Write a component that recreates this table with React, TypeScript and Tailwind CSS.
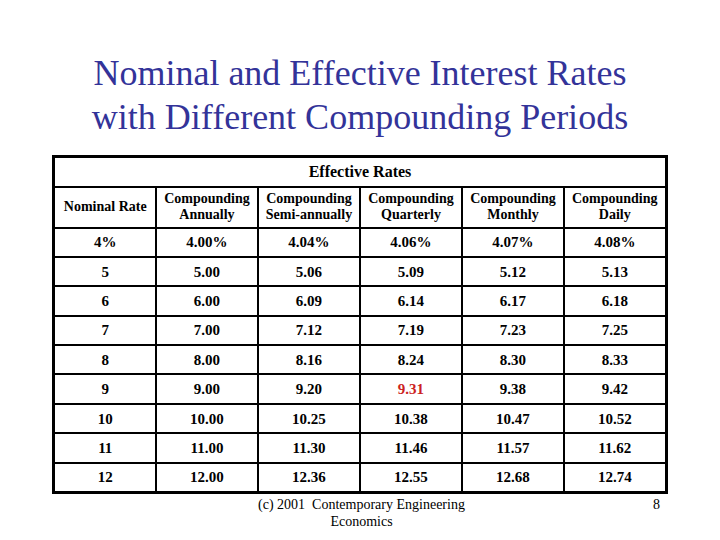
import React from "react";

const heads = [
  ["Nominal Rate"],
  ["Compounding", "Annually"],
  ["Compounding", "Semi-annually"],
  ["Compounding", "Quarterly"],
  ["Compounding", "Monthly"],
  ["Compounding", "Daily"],
];

const rows = [
  ["4%", "4.00%", "4.04%", "4.06%", "4.07%", "4.08%"],
  ["5", "5.00", "5.06", "5.09", "5.12", "5.13"],
  ["6", "6.00", "6.09", "6.14", "6.17", "6.18"],
  ["7", "7.00", "7.12", "7.19", "7.23", "7.25"],
  ["8", "8.00", "8.16", "8.24", "8.30", "8.33"],
  ["9", "9.00", "9.20", "9.31", "9.38", "9.42"],
  ["10", "10.00", "10.25", "10.38", "10.47", "10.52"],
  ["11", "11.00", "11.30", "11.46", "11.57", "11.62"],
  ["12", "12.00", "12.36", "12.55", "12.68", "12.74"],
];

export default function App() {
  return (
    <div className="w-[720px] h-[540px] bg-white flex flex-col items-center text-black font-['Liberation_Serif','Times_New_Roman',serif]">
      <div className="pt-[51px] text-[36px] leading-[44px] text-[#333399] text-center font-['Liberation_Serif','Times_New_Roman',serif] font-normal">
        <div>Nominal and Effective Interest Rates</div>
        <div>with Different Compounding Periods</div>
      </div>
      <table className="mt-[16px] w-[612px] border-collapse border-[3px] border-black table-fixed">
        <colgroup>
          <col className="w-[102px]" />
          <col className="w-[102px]" />
          <col className="w-[102px]" />
          <col className="w-[102px]" />
          <col className="w-[102px]" />
          <col className="w-[102px]" />
        </colgroup>
        <tbody>
          <tr className="h-[30px]">
            <td colSpan={6} className="border-2 border-black text-center font-bold text-[16px] leading-[18px] p-0">
              Effective Rates
            </td>
          </tr>
          <tr className="h-[41px]">
            {heads.map((h, i) => (
              <td key={i} className="border-2 border-black text-center font-bold text-[14px] leading-[16px] p-0 whitespace-nowrap">
                {h.map((l, j) => (
                  <div key={j}>{l}</div>
                ))}
              </td>
            ))}
          </tr>
          {rows.map((r, i) => (
            <tr key={i} className="h-[29.4px]">
              {r.map((c, j) => (
                <td
                  key={j}
                  className={`border-2 border-black text-center font-bold text-[15px] leading-[16px] p-0 ${
                    c === "9.31" ? "text-[#cc2222]" : ""
                  }`}
                >
                  {c}
                </td>
              ))}
            </tr>
          ))}
        </tbody>
      </table>
      <div className="w-[612px] flex text-[14px] leading-[17px] mt-[2px]">
        <div className="w-[200px]" />
        <div className="w-[215px] text-center">
          (c) 2001&nbsp; Contemporary Engineering Economics
        </div>
        <div className="flex-1 text-right pr-[6px]">8</div>
      </div>
    </div>
  );
}
